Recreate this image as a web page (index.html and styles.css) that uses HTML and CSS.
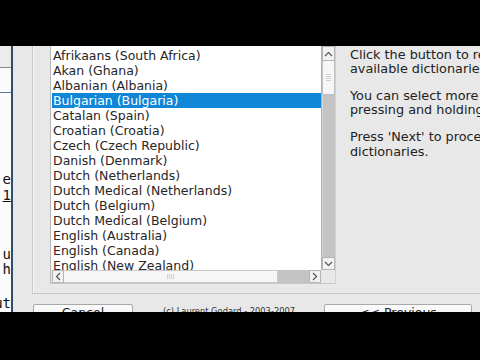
FILE: index.html
```html
<!DOCTYPE html>
<html>
<head>
<meta charset="utf-8">
<link rel="stylesheet" href="styles.css">
</head>
<body>
<div class="screen">
  <div class="bar"></div>
  <div class="stage">
    <div class="backwin">
      <div class="bw-head"></div>
      <div class="bw-body">
        <div class="bw-rule"></div>
        <div class="bw-line l1">e</div>
        <div class="bw-line l2"><u>1</u></div>
        <div class="bw-line l3">'u</div>
        <div class="bw-line l4">h</div>
        <div class="bw-line l5">ut</div>
      </div>
    </div>
    <div class="dialog">
      <div class="frame">
        <div class="listbox">
          <div class="list-area">
            <ul class="items">
              <li>Afrikaans (South Africa)</li>
              <li>Akan (Ghana)</li>
              <li>Albanian (Albania)</li>
              <li class="sel">Bulgarian (Bulgaria)</li>
              <li>Catalan (Spain)</li>
              <li>Croatian (Croatia)</li>
              <li>Czech (Czech Republic)</li>
              <li>Danish (Denmark)</li>
              <li>Dutch (Netherlands)</li>
              <li>Dutch Medical (Netherlands)</li>
              <li>Dutch (Belgium)</li>
              <li>Dutch Medical (Belgium)</li>
              <li>English (Australia)</li>
              <li>English (Canada)</li>
              <li>English (New Zealand)</li>
              <li>English (South Africa)</li>
            </ul>
            <div class="vscroll">
              <div class="arrow up"><svg width="9" height="6" viewBox="0 0 9 6"><path d="M1 5 L4.5 1.5 L8 5" fill="none" stroke="#555" stroke-width="1.2"/></svg></div>
              <div class="vthumb"><span class="grip-v"></span></div>
              <div class="vtrack"></div>
              <div class="arrow down"><svg width="9" height="6" viewBox="0 0 9 6"><path d="M1 1 L4.5 4.5 L8 1" fill="none" stroke="#555" stroke-width="1.2"/></svg></div>
            </div>
          </div>
          <div class="hrow">
            <div class="hscroll">
              <div class="arrow left"><svg width="6" height="9" viewBox="0 0 6 9"><path d="M5 1 L1.5 4.5 L5 8" fill="none" stroke="#555" stroke-width="1.2"/></svg></div>
              <div class="hthumb"><span class="grip-h"></span></div>
              <div class="htrack"></div>
              <div class="arrow right"><svg width="6" height="9" viewBox="0 0 6 9"><path d="M1 1 L4.5 4.5 L1 8" fill="none" stroke="#555" stroke-width="1.2"/></svg></div>
            </div>
            <div class="corner"></div>
          </div>
        </div>
        <div class="help">
          <p>Click the button to remove the<br>available dictionaries.</p>
          <p>You can select more than one by<br>pressing and holding the Ctrl key.</p>
          <p>Press 'Next' to proceed with the<br>dictionaries.</p>
        </div>
      </div>
      <div class="buttons">
        <div class="btn cancel">Cancel</div>
        <span class="copy">(c) Laurent Godard - 2003-2007</span>
        <div class="btn prev">&lt;&lt; Previous</div>
      </div>
    </div>
  </div>
  <div class="bar bottom"></div>
</div>
</body>
</html>
```

FILE: styles.css
```css
* { box-sizing: border-box; }
html, body { margin: 0; padding: 0; background: #000; }
body { width: 480px; height: 360px; overflow: hidden; font-family: "DejaVu Sans", sans-serif; }

.screen { display: flex; flex-direction: column; width: 480px; height: 360px; }
.bar { height: 46px; background: #000; flex: none; }
.bar.bottom { height: 48px; }
.stage { height: 266px; display: flex; overflow: hidden; flex: none; }

.backwin { width: 13px; flex: none; border-right: 2px solid #2e4e6c; background: #fbfbfb; display: flex; flex-direction: column; overflow: hidden; }
.bw-head { height: 22px; background: #ececec; border-bottom: 1px solid #8a8a8a; flex: none; }
.bw-body { position: relative; flex: 1; }
.bw-rule { height: 1px; background: #5a7aa0; margin-top: 24px; }
.bw-line { position: absolute; right: 0; font-family: "DejaVu Sans Mono", monospace; font-size: 14px; color: #111; white-space: nowrap; line-height: 15px; }
.l1 { top: 104px; }
.l2 { top: 120px; }
.l3 { top: 179px; }
.l4 { top: 194px; }
.l5 { top: 228px; }

.dialog { flex: 1; background: #e8e8e8; display: flex; flex-direction: column; }
.frame { margin-left: 19px; height: 248px; border-left: 1px solid #c9c9c9; border-bottom: 1px solid #c9c9c9; box-shadow: inset 1px 0 0 #f8f8f8; display: flex; padding-left: 17px; flex: none; }

.listbox { width: 286px; height: 238px; border-left: 1px solid #b8b8b8; border-right: 1px solid #d0d0d0; border-bottom: 1px solid #c8c8c8; background: #fff; display: flex; flex-direction: column; flex: none; }
.list-area { height: 224px; display: flex; overflow: hidden; flex: none; }
.items { list-style: none; margin: 0; padding: 2px 0 0 1px; flex: 1; overflow: hidden; font-size: 12.5px; color: #262626; }
.items li { height: 15px; line-height: 15px; padding-left: 1px; white-space: nowrap; }
.items li.sel { background: #0f86d6; color: #fff; }

.vscroll { width: 14px; flex: none; display: flex; flex-direction: column; background: #c6c6c6; border-left: 1px solid #b0b0b0; }
.arrow { display: flex; align-items: center; justify-content: center; background: #f2f2f2; border: 1px solid #b4b4b4; flex: none; }
.arrow.up { height: 15px; }
.arrow.down { height: 13px; }
.vthumb { height: 34px; background: #f6f6f6; border: 1px solid #c0c0c0; border-top: none; display: flex; align-items: center; justify-content: center; flex: none; }
.grip-v { width: 5px; height: 8px; background: repeating-linear-gradient(#d0d0d0 0 1px, transparent 1px 2px); }
.vtrack { flex: 1; background: #c4c4c4; border-left: 1px solid #d6d6d6; }

.hrow { height: 13px; display: flex; flex: none; background: #e8e8e8; }
.hscroll { flex: 1; display: flex; margin-left: 1px; background: #c4c4c4; }
.arrow.left, .arrow.right { width: 12px; }
.hthumb { width: 214px; background: #f6f6f6; border: 1px solid #c8c8c8; border-left: none; display: flex; align-items: center; justify-content: center; flex: none; }
.grip-h { width: 8px; height: 5px; background: repeating-linear-gradient(90deg, #d0d0d0 0 1px, transparent 1px 2px); }
.htrack { flex: 1; }
.corner { width: 14px; flex: none; background: #e8e8e8; }

.help { margin-left: 14px; padding-top: 1.5px; font-size: 12.8px; line-height: 14.2px; color: #222; white-space: nowrap; overflow: hidden; flex: 1; }
.help p { margin: 0 0 13px; }

.buttons { display: flex; align-items: flex-start; padding: 10px 0 0 20px; flex: none; }
.btn { font-size: 12.5px; color: #222; background: linear-gradient(#fbfbfb, #ececec); border: 1px solid #a8a8a8; border-radius: 2px; height: 26px; padding: 1px 0 0; line-height: 14px; text-align: center; flex: none; }
.cancel { width: 100px; }
.copy { font-size: 8.3px; color: #333; margin: 2px 0 0 30px; width: 161px; flex: none; white-space: nowrap; }
.prev { width: 148px; }
```
